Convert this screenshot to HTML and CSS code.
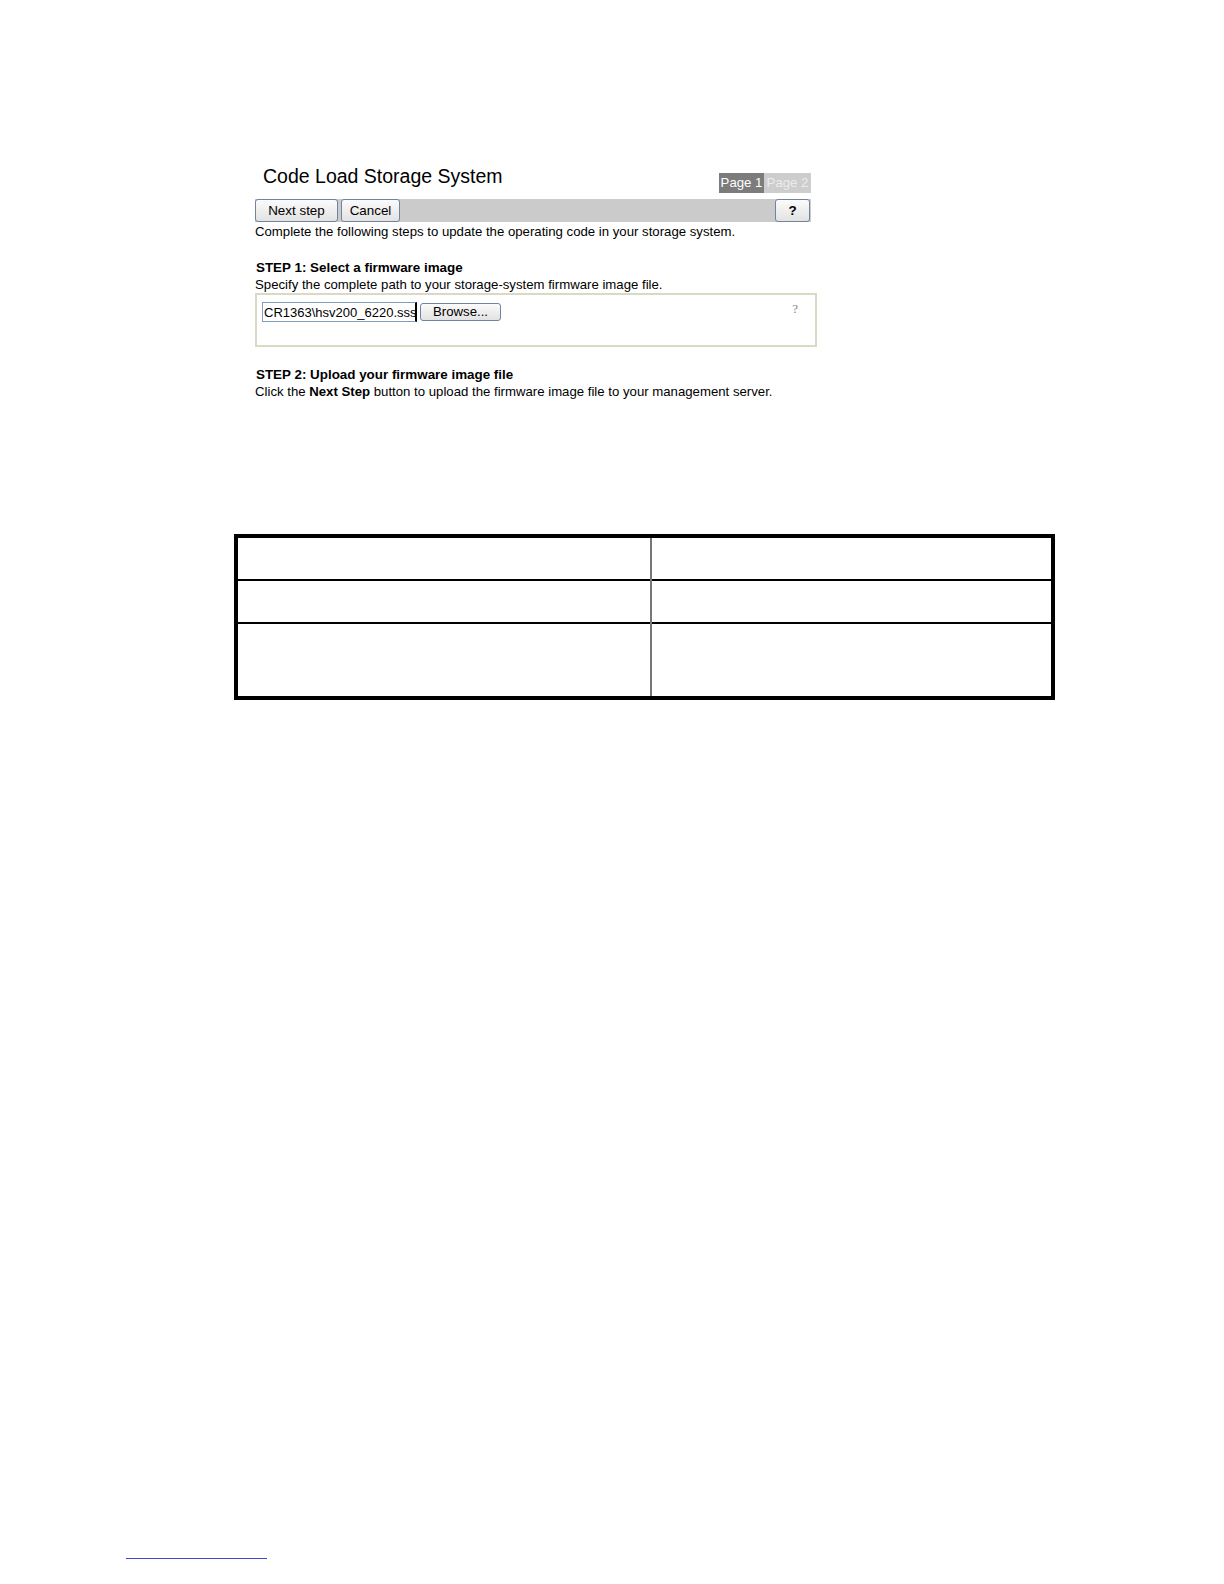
FILE: index.html
```html
<!DOCTYPE html>
<html>
<head>
<meta charset="utf-8">
<link rel="stylesheet" href="styles.css">
</head>
<body>
<div class="page">
  <div class="shot">
    <div class="head">
      <div class="title">Code Load Storage System</div>
      <div class="tabs"><span class="tab on">Page 1</span><span class="tab off">Page 2</span></div>
    </div>
    <div class="toolbar">
      <button class="btn next">Next step</button>
      <button class="btn cancel">Cancel</button>
      <span class="grow"></span>
      <button class="btn help">?</button>
    </div>
    <p class="intro">Complete the following steps to update the operating code in your storage system.</p>
    <h3 class="step">STEP 1: Select a firmware image</h3>
    <p class="desc">Specify the complete path to your storage-system firmware image file.</p>
    <div class="box">
      <span class="file">CR1363\hsv200_6220.sss</span>
      <button class="btn browse">Browse...</button>
      <span class="grow"></span>
      <span class="q">?</span>
    </div>
    <h3 class="step step2">STEP 2: Upload your firmware image file</h3>
    <p class="desc">Click the <b>Next Step</b> button to upload the firmware image file to your management server.</p>
  </div>
  <table class="grid">
    <tr class="r1"><td></td><td></td></tr>
    <tr class="r2"><td></td><td></td></tr>
    <tr class="r3"><td></td><td></td></tr>
  </table>
  <div class="footline"></div>
</div>
</body>
</html>
```
FILE: styles.css
```css
html, body { margin: 0; padding: 0; background: #fff; }
body { font-family: "Liberation Sans", Arial, sans-serif; color: #000; }
.page { width: 1224px; height: 1584px; position: relative; }
.shot { margin-left: 255px; width: 562px; padding-top: 163px; }
.head { display: flex; align-items: flex-end; justify-content: space-between; height: 30px; width: 556px; }
.title { font-size: 19.5px; padding-left: 8px; line-height: 24px; padding-bottom: 5px; }
.tabs { display: flex; white-space: nowrap; }
.tab { font-size: 13.2px; line-height: 20px; height: 20px; text-align: center; white-space: nowrap; }
.tab.on { background: #7c7c7c; color: #fff; width: 45px; }
.tab.off { background: #cdcdcd; color: #ececec; width: 47px; }
.toolbar { display: flex; align-items: center; background: #cbcbcb; width: 556px; height: 23px; margin-top: 6px; gap: 3px; }
.grow { flex: 1; }
.btn { font-family: "Liberation Sans", Arial, sans-serif; font-size: 13.4px; height: 23px; padding: 0; background: linear-gradient(#fbfbfb, #e2e2e2); border: 1px solid #6f84a0; border-radius: 3px; color: #000; }
.next { width: 83px; }
.cancel { width: 59px; }
.help { width: 35px; font-weight: bold; margin-right: 1px; }
.intro { margin: 2px 0 0; font-size: 13.2px; line-height: 16px; }
.step { margin: 20px 0 0; font-size: 13.4px; line-height: 16px; font-weight: bold; padding-left: 1px; }
.desc { margin: 1px 0 0; font-size: 13.2px; line-height: 16px; }
.box { display: flex; align-items: flex-start; border: 2px solid #d9d9c6; height: 54px; margin-top: 0; padding: 7px 0 0 5px; box-sizing: border-box; width: 562px; }
.file { font-size: 13px; height: 20px; line-height: 19px; width: 155px; border: 1px solid #7f9db9; border-right: 2px solid #000; box-sizing: border-box; padding-left: 1px; overflow: hidden; white-space: nowrap; }
.browse { width: 81px; height: 18px; margin-left: 3px; margin-top: 1px; font-size: 13.2px; line-height: 14px; }
.q { color: #888; font-size: 13px; font-family: "Liberation Serif", serif; margin-right: 17px; margin-top: -1px; }
.step2 { margin-top: 20px; }
.grid { margin: 134px 0 0 234px; width: 821px; border-collapse: collapse; border: 4px solid #000; }
.grid td { padding: 0; border-top: 2px solid #000; border-left: 2px solid #777; }
.grid td:first-child { width: 412px; border-left: none; }
.r1 td { height: 41px; border-top: none; }
.r2 td { height: 41px; }
.r3 td { height: 72px; }
.footline { position: absolute; left: 126px; top: 1558px; width: 141px; height: 1px; background: #3b4bd0; }
```
